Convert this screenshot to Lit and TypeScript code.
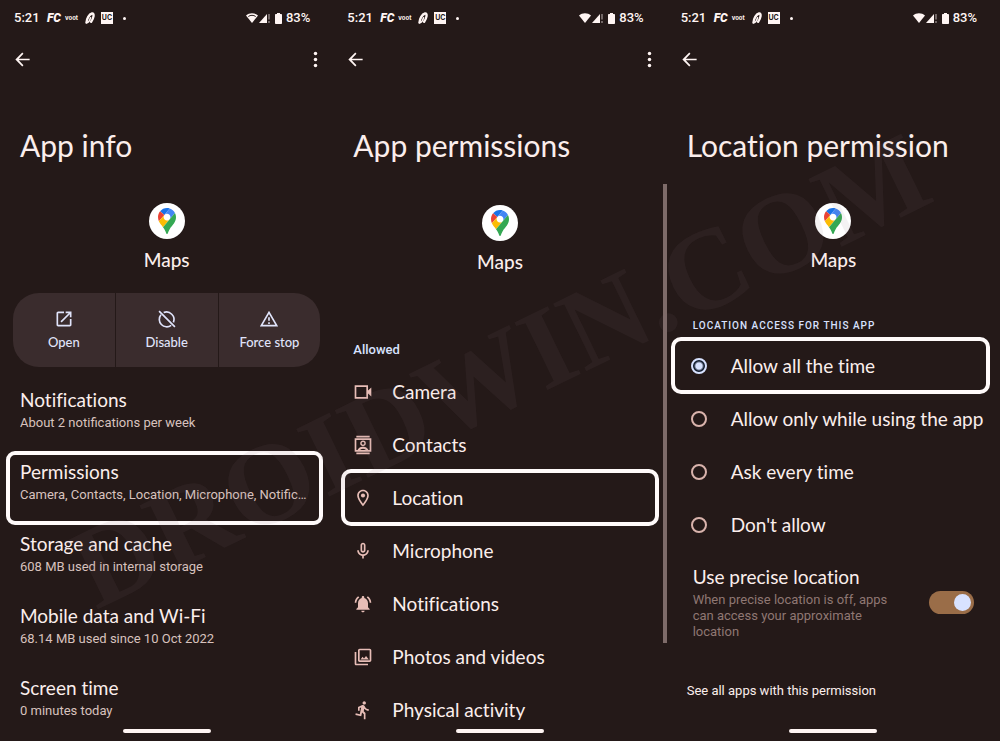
import { LitElement, html, css, svg, nothing } from "lit";
import { customElement, property } from "lit/decorators.js";
import { classMap } from "lit/directives/class-map.js";

const icons: Record<string, unknown> = {
  back: svg`<path d="M21 11H7.2l6-6.2L11.7 3.300 3 12l8.700 8.700 1.500-1.500-6-6.200H21z"/>`,
  more: svg`<circle cx="12" cy="4.500" r="2.200"/><circle cx="12" cy="12" r="2.200"/><circle cx="12" cy="19.500" r="2.200"/>`,
  open: svg`<path d="M19 19H5V5h7V3H5c-1.110 0-2 .9-2 2v14c0 1.100.89 2 2 2h14c1.100 0 2-.9 2-2v-7h-2v7zM14 3v2h3.590l-9.830 9.830 1.410 1.410L19 6.410V10h2V3h-7z"/>`,
  disable: svg`<g fill="none" stroke="currentColor" stroke-width="2"><path d="M8 4.300A9 9 0 0 1 19.700 16M17 19.700A9 9 0 0 1 4.700 6.800M2.500 2.500l19 19"/></g>`,
  warn: svg`<path d="M12 5.990L19.530 19H4.470L12 5.990M12 2L1 21h22L12 2zm1 14h-2v2h2v-2zm0-6h-2v4h2v-4z"/>`,
  camera: svg`<path fill="none" stroke="currentColor" stroke-width="2" d="M3 5h14v14H3z"/><path d="M17 11l5-4.500v11L17 13z"/>`,
  contacts: svg`<path d="M4 1h16v2H4zM4 21h16v2H4z"/><path fill="none" stroke="currentColor" stroke-width="2" d="M3 5h18v14H3z"/><circle cx="12" cy="10" r="2.500" fill="none" stroke="currentColor" stroke-width="1.700"/><path d="M5.500 19c0-3 3.500-4.800 6.500-4.800s6.500 1.800 6.500 4.800h-2.300c-.7-1.600-2.700-2.600-4.200-2.600s-3.500 1-4.200 2.600z"/>`,
  location: svg`<path d="M12 2C8.130 2 5 5.130 5 9c0 5.250 7 13 7 13s7-7.750 7-13c0-3.870-3.130-7-7-7zM7 9c0-2.760 2.240-5 5-5s5 2.240 5 5c0 2.880-2.880 7.190-5 9.880C9.920 16.210 7 11.850 7 9z"/><circle cx="12" cy="9" r="2.500"/>`,
  mic: svg`<path d="M12 14c1.660 0 3-1.340 3-3V5c0-1.660-1.340-3-3-3S9 3.340 9 5v6c0 1.660 1.340 3 3 3zm-1-9c0-.55.45-1 1-1s1 .45 1 1v6c0 .55-.45 1-1 1s-1-.45-1-1V5zm6 6c0 2.760-2.240 5-5 5s-5-2.240-5-5H5c0 3.530 2.610 6.430 6 6.920V21h2v-3.080c3.390-.49 6-3.390 6-6.920h-2z"/>`,
  bell: svg`<path d="M7.580 4.080L6.150 2.650C3.750 4.480 2.170 7.300 2.030 10.500h2c.15-2.650 1.510-4.970 3.550-6.420zm12.390 6.420h2c-.15-3.200-1.730-6.020-4.120-7.850l-1.420 1.430c2.020 1.450 3.390 3.770 3.540 6.420zM18 11c0-3.070-1.640-5.640-4.500-6.320V4c0-.83-.67-1.500-1.500-1.500s-1.500.67-1.500 1.500v.68C7.630 5.360 6 7.920 6 11v5l-2 2v1h16v-1l-2-2v-5zm-6 11c.14 0 .27-.01.4-.04.65-.14 1.180-.58 1.440-1.180.1-.24.15-.5.15-.78h-4c.01 1.100.9 2 2.010 2z"/>`,
  photos: svg`<path d="M20 4v12H8V4h12m0-2H8c-1.100 0-2 .9-2 2v12c0 1.100.9 2 2 2h12c1.100 0 2-.9 2-2V4c0-1.100-.9-2-2-2zm-8.500 9.670l1.690 2.260 2.480-3.100L19 15H9zM2 6v14c0 1.100.9 2 2 2h14v-2H4V6H2z"/>`,
  run: svg`<path d="M13.490 5.480c1.100 0 2-.9 2-2s-.9-2-2-2-2 .9-2 2 .9 2 2 2zm-3.600 13.900l1-4.400 2.100 2v6h2v-7.500l-2.100-2 .6-3c1.300 1.500 3.300 2.500 5.500 2.500v-2c-1.900 0-3.500-1-4.300-2.400l-1-1.600c-.4-.6-1-1-1.700-1-.3 0-.5.1-.8.1l-5.200 2.200v4.700h2v-3.400l1.800-.7-1.600 8.100-4.900-1-.4 2 7 1.400z"/>`,
};

const icon = (name: string) =>
  html`<svg class="icon" viewBox="0 0 24 24" fill="currentColor" aria-hidden="true">${icons[name]}</svg>`;

const baseStyles = css`
  * {
    box-sizing: border-box;
  }
  .icon {
    display: block;
    width: 20px;
    height: 20px;
    flex: none;
  }
  button {
    font: inherit;
    color: inherit;
    background: none;
    border: 0;
    padding: 0;
    cursor: pointer;
  }
  a {
    color: inherit;
    text-decoration: none;
  }
`;

@customElement("status-bar")
class StatusBar extends LitElement {
  @property({ type: Boolean }) weak = false;

  static styles = [
    baseStyles,
    css`
      :host {
        display: flex;
        align-items: center;
        height: 36px;
        padding: 0 23px 0 14px;
        color: #fff5f3;
        font: 500 13px/16px Roboto, sans-serif;
      }
      .time {
        width: 33px;
      }
      .fc {
        width: 18px;
        font: italic 900 12px/14px Roboto, sans-serif;
      }
      .voot {
        width: 20px;
        font: 700 6px/8px Inter, sans-serif;
      }
      .swirl {
        width: 10px;
        height: 12px;
        margin-right: 6px;
      }
      .uc {
        width: 12px;
        height: 12px;
        background: #fff5f3;
        color: #241918;
        font: 700 7px/12px Inter, sans-serif;
        text-align: center;
      }
      .dot {
        width: 3px;
        height: 3px;
        border-radius: 50%;
        background: #fff5f3;
        margin-left: 10px;
      }
      .system {
        display: flex;
        align-items: center;
        margin-left: auto;
      }
      .wifi {
        width: 12px;
        height: 10px;
      }
      .signal {
        width: 12px;
        height: 10px;
        margin-left: 1px;
      }
      .battery {
        width: 7px;
        height: 11px;
        margin: 0 4px 0 4px;
      }
    `,
  ];

  render() {
    return html`
      <span class="time">5:21</span>
      <span class="fc">FC</span>
      <span class="voot">voot</span>
      <svg class="swirl" viewBox="0 0 10 12" fill="none" stroke="currentColor" stroke-linecap="round" aria-hidden="true">
        <path stroke-width="2.400" d="M1.500 10.500C1.800 7 4 2.200 7 1.500c2.600-.4 1.800 4.500-.9 8.300" />
        <path stroke-width="1.600" d="M1.600 10.600c1.500.2 3.200-2.200 3.900-4.800" />
      </svg>
      <span class="uc">UC</span>
      <span class="dot"></span>
      <span class="system">
        <svg class="wifi" viewBox="0 0 12 10" fill="currentColor" aria-hidden="true">
          <path d="M6 10L0 2.500C3.400-.6 8.600-.6 12 2.500z" />
          ${this.weak ? svg`<path fill="none" stroke="#241918" d="M2.300 3.500c2.200-1.600 5.200-1.600 7.400 0" />` : nothing}
        </svg>
        <svg class="signal" viewBox="0 0 12 10" fill="currentColor" aria-hidden="true">
          <path d="M8 1v9H0z" />
          <path opacity=".7" d="M9.500 1h1v5.500h-1zM9.500 8h1v2h-1z" />
        </svg>
        <svg class="battery" viewBox="0 0 7 11" fill="currentColor" aria-hidden="true">
          <path d="M2 0h3v1h1.200q.8 0 .8.800v8.400q0 .8-.8.800H.8q-.8 0-.8-.8V1.800Q0 1 .8 1H2z" />
        </svg>
        <span>83%</span>
      </span>
    `;
  }
}

@customElement("app-badge")
class AppBadge extends LitElement {
  static styles = css`
    :host {
      display: flex;
      flex-direction: column;
      align-items: center;
      gap: 9px;
      font: 500 19px/24px Lato, sans-serif;
    }
    .disc {
      display: grid;
      place-items: center;
      width: 36px;
      height: 36px;
      border-radius: 50%;
      background: #fff;
    }
    .pin {
      width: 18px;
      height: 26px;
    }
  `;

  render() {
    return html`
      <span class="disc">
        <svg class="pin" viewBox="0 0 92.400 132.400" aria-hidden="true">
          <path fill="#1a73e8" d="M60.200 2.200C55.800.8 51 0 46.100 0 32 0 19.300 6.400 10.800 16.500l21.800 18.300L60.200 2.200z" />
          <path fill="#ea4335" d="M10.800 16.500C4.100 24.500 0 34.900 0 46.100c0 8.700 1.700 15.700 4.600 22l28-33.300-21.800-18.300z" />
          <path fill="#4285f4" d="M46.200 28.500c9.800 0 17.700 7.900 17.700 17.700 0 4.300-1.600 8.300-4.200 11.400 0 0 13.900-16.600 27.500-32.700-5.600-10.800-15.300-19-27-22.700L32.600 34.800c3.300-3.800 8.100-6.300 13.600-6.300" />
          <path fill="#fbbc04" d="M46.200 63.800c-9.800 0-17.700-7.900-17.700-17.700 0-4.300 1.500-8.300 4.100-11.300l-28 33.300c4.800 10.600 12.800 19.200 21 29.900l34.100-40.500c-3.300 3.900-8.100 6.300-13.500 6.300" />
          <path fill="#34a853" d="M59.100 109.200c15.400-24.100 33.300-35 33.300-63 0-7.700-1.900-14.900-5.200-21.300L25.600 98c2.600 3.400 5.300 7.300 7.900 11.300 9.400 14.500 6.800 23.100 12.800 23.100s3.400-8.700 12.800-23.200" />
        </svg>
      </span>
      <span>Maps</span>
    `;
  }
}

@customElement("phone-screen")
class PhoneScreen extends LitElement {
  @property() heading = "";
  @property({ type: Boolean }) menu = false;
  @property({ type: Boolean }) weak = false;

  static styles = [
    baseStyles,
    css`
      :host {
        position: relative;
        display: block;
        min-width: 0;
        min-height: 100vh;
      }
      .toolbar {
        display: flex;
        align-items: center;
        justify-content: space-between;
        height: 46px;
        padding: 0 8px 0 13px;
        color: #fff5f3;
      }
      .toolbar .icon {
        width: 19px;
        height: 19px;
      }
      h1 {
        margin: 43px 20px 0;
        font: 400 30px/40px Lato, sans-serif;
        font-variant-ligatures: none;
        white-space: nowrap;
      }
      .home {
        position: absolute;
        left: calc(50% - 44px);
        bottom: 8px;
        width: 88px;
        height: 4px;
        border-radius: 2px;
        background: #fff5f3;
      }
    `,
  ];

  render() {
    return html`
      <status-bar ?weak=${this.weak}></status-bar>
      <div class="toolbar">
        <button aria-label="Back">${icon("back")}</button>
        ${this.menu ? html`<button aria-label="More options">${icon("more")}</button>` : nothing}
      </div>
      <h1>${this.heading}</h1>
      <slot></slot>
      <div class="home"></div>
    `;
  }
}

const settings = [
  { title: "Notifications", note: "About 2 notifications per week" },
  { title: "Permissions", note: "Camera, Contacts, Location, Microphone, Notifications", marked: true },
  { title: "Storage and cache", note: "608 MB used in internal storage" },
  { title: "Mobile data and Wi-Fi", note: "68.14 MB used since 10 Oct 2022" },
  { title: "Screen time", note: "0 minutes today" },
];

const actions = [
  { icon: "open", label: "Open" },
  { icon: "disable", label: "Disable" },
  { icon: "warn", label: "Force stop" },
];

const permissions = [
  { icon: "camera", label: "Camera" },
  { icon: "contacts", label: "Contacts" },
  { icon: "location", label: "Location", marked: true },
  { icon: "mic", label: "Microphone" },
  { icon: "bell", label: "Notifications" },
  { icon: "photos", label: "Photos and videos" },
  { icon: "run", label: "Physical activity" },
];

const choices = ["Allow all the time", "Allow only while using the app", "Ask every time", "Don't allow"];

@customElement("app-root")
class AppRoot extends LitElement {
  static styles = [
    baseStyles,
    css`
      :host {
        position: relative;
        display: grid;
        grid-template-columns: repeat(3, minmax(0, 1fr));
        min-height: 100vh;
        overflow: hidden;
        background: #241918;
        color: #fbeeec;
        font: 400 13px/16px Roboto, sans-serif;
      }
      app-badge {
        margin-top: 38px;
      }
      .lower {
        margin-top: 40px;
      }
      .marked {
        outline: 4px solid #fffafa;
        outline-offset: -2px;
        border-radius: 8px;
      }
      .title {
        font: 400 19px/24px Lato, sans-serif;
        font-variant-ligatures: none;
        white-space: nowrap;
      }

      .actions {
        display: grid;
        grid-template-columns: repeat(3, 1fr);
        gap: 1px;
        margin: 21px 13px 0;
        border-radius: 26px;
        overflow: hidden;
      }
      .action {
        display: flex;
        flex-direction: column;
        align-items: center;
        gap: 4px;
        height: 74px;
        padding-top: 16px;
        background: #3a2c2d;
        color: #e0e4fb;
        font: 500 13px/18px Lato, sans-serif;
      }

      .settings {
        margin-top: 13px;
      }
      .setting {
        display: block;
        height: 72px;
        margin: 0 11px 0 7px;
        padding: 8px 11px 0 13px;
      }
      .setting.marked {
        outline-offset: -3px;
      }
      .note {
        display: block;
        margin-top: 3px;
        color: #d8c2be;
        overflow: hidden;
        text-overflow: ellipsis;
        white-space: nowrap;
      }

      .group {
        margin: 68px 20px 0;
        color: #d8e2ff;
        font: 500 13px/16px Roboto, sans-serif;
      }
      .permissions {
        margin-top: 7px;
      }
      .permission {
        display: flex;
        align-items: center;
        gap: 19px;
        height: 53px;
        margin: 0 10px;
        padding-left: 10px;
      }
      .permission .icon {
        color: #e7bdb6;
      }
      .scrollbar {
        position: absolute;
        top: 184px;
        right: 0;
        width: 4px;
        height: 459px;
        background: #7e6b69;
      }

      fieldset {
        min-width: 0;
        margin: 48px 0 0;
        padding: 0;
        border: 0;
      }
      legend {
        padding: 0 26px;
        color: #d8e2ff;
        font: 500 10px/12px Roboto, sans-serif;
        letter-spacing: 1px;
      }
      .choices {
        padding-top: 7px;
      }
      .choice {
        display: flex;
        align-items: center;
        gap: 24px;
        height: 53px;
        margin: 0 12px 0 6px;
        padding-left: 18px;
      }
      .radio {
        appearance: none;
        flex: none;
        width: 16px;
        height: 16px;
        margin: 0;
        border: 2px solid #d9b3ac;
        border-radius: 50%;
      }
      .radio:checked {
        border-color: #d8e2ff;
        background: radial-gradient(circle, #d8e2ff 3px, #101a2c 5px);
      }
      .precise {
        display: flex;
        align-items: center;
        gap: 20px;
        margin-top: 14px;
        padding: 0 26px;
      }
      .words {
        flex: 1;
      }
      .detail {
        display: block;
        margin-top: 3px;
        color: #8f7773;
      }
      .switch {
        appearance: none;
        flex: none;
        display: flex;
        align-items: center;
        justify-content: flex-end;
        width: 45px;
        height: 23px;
        margin: 0;
        padding: 3px;
        border-radius: 12px;
        background: #9a6d48;
      }
      .switch::before {
        content: "";
        width: 17px;
        height: 17px;
        border-radius: 50%;
        background: #d8e2ff;
      }
      .all {
        display: block;
        margin: 43px 20px 0;
      }

      .watermark {
        position: absolute;
        inset: 0;
        display: grid;
        place-items: center;
        pointer-events: none;
        color: rgba(128, 114, 120, 0.09);
        font: 700 115px/120px "Liberation Serif", serif;
      }
      .watermark span {
        rotate: -26deg;
      }
    `,
  ];

  render() {
    return html`
      <phone-screen heading="App info" menu weak>
        <app-badge></app-badge>
        <div class="actions">
          ${actions.map((a) => html`<button class="action">${icon(a.icon)}<span>${a.label}</span></button>`)}
        </div>
        <nav class="settings">
          ${settings.map(
            (s) => html`<a href="#" class=${classMap({ setting: true, marked: !!s.marked })}>
              <span class="title">${s.title}</span>
              <span class="note">${s.note}</span>
            </a>`
          )}
        </nav>
      </phone-screen>

      <phone-screen heading="App permissions" menu>
        <app-badge class="lower"></app-badge>
        <div class="group">Allowed</div>
        <nav class="permissions">
          ${permissions.map(
            (p) => html`<a href="#" class=${classMap({ permission: true, marked: !!p.marked })}>
              ${icon(p.icon)}<span class="title">${p.label}</span>
            </a>`
          )}
        </nav>
        <div class="scrollbar"></div>
      </phone-screen>

      <phone-screen heading="Location permission">
        <app-badge></app-badge>
        <fieldset>
          <legend>LOCATION ACCESS FOR THIS APP</legend>
          <div class="choices">
            ${choices.map(
              (c, i) => html`<label class=${classMap({ choice: true, marked: i === 0 })}>
                <input class="radio" type="radio" name="access" ?checked=${i === 0} />
                <span class="title">${c}</span>
              </label>`
            )}
          </div>
        </fieldset>
        <div class="precise">
          <label class="words" for="precise">
            <span class="title">Use precise location</span>
            <span class="detail">When precise location is off, apps can access your approximate location</span>
          </label>
          <input id="precise" class="switch" type="checkbox" role="switch" checked />
        </div>
        <a class="all" href="#">See all apps with this permission</a>
      </phone-screen>

      <div class="watermark" aria-hidden="true"><span>DROIDWIN.COM</span></div>
    `;
  }
}
